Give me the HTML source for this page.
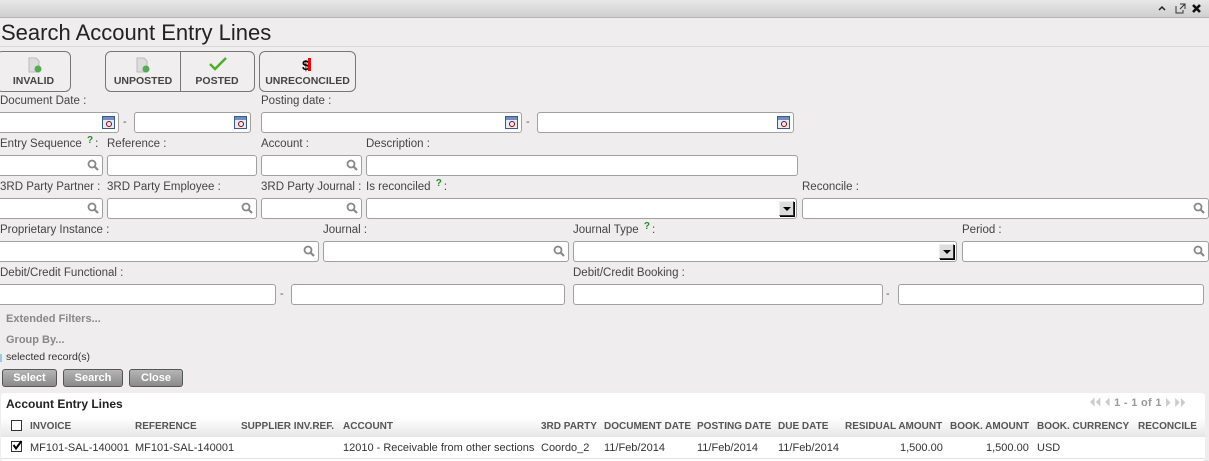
<!DOCTYPE html>
<html><head><meta charset="utf-8"><style>
*{margin:0;padding:0;box-sizing:border-box}
body{width:1209px;height:461px;background:#efedee;font-family:"Liberation Sans",Arial,sans-serif;position:relative;overflow:hidden;color:#444}
.a{position:absolute}
.tb{left:0;top:0;width:1209px;height:18px;background:linear-gradient(#e8e8e8,#cfcfcf);border-bottom:1px solid #b5b5b5}
h1{position:absolute;left:1px;top:20px;font-size:22px;font-weight:normal;color:#222;letter-spacing:0}
.hr{left:0;top:46px;width:1209px;height:1px;background:#d9d9d9}
.btn{position:absolute;top:51px;height:41px;border:1px solid #777;border-radius:6px;background:#f0eeef;font-size:10.5px;font-weight:bold;color:#444;text-align:center}
.btn span{position:absolute;bottom:4px;left:0;right:0}
.l{position:absolute;font-size:11.5px;color:#444;white-space:nowrap;line-height:13px}
.q{position:relative;top:-4px;color:#2a8a2a;font-size:10px;font-weight:bold;margin:0 2px}
.i{position:absolute;height:21px;background:#fff;border:1px solid #a0a0a0;border-radius:3px}
.d{position:absolute;font-size:11px;color:#555}
.cal{position:absolute;right:3px;top:3px;width:13px;height:13px;border:1px solid #3b5a8a;background:#e6ecf5}
.cal:before{content:"";position:absolute;left:0;top:0;right:0;height:3px;background:#6d8fc4}
.cal:after{content:"";position:absolute;right:2px;top:4px;width:4px;height:4px;border:1px solid #900;border-radius:50%}
.srch{position:absolute;right:3px;top:3px}
.sel{position:absolute;right:2px;top:2px;width:15px;height:15px;background:#ddd;border:1px solid #333;border-top-color:#eee;border-left-color:#eee;box-shadow:1px 1px 0 #000}
.sel:after{content:"";position:absolute;left:3px;top:5px;border-left:4px solid transparent;border-right:4px solid transparent;border-top:4px solid #000}
.lk{position:absolute;font-size:11px;color:#888;font-weight:bold}
.gb{position:absolute;top:369px;height:18px;border:1px solid #555;border-radius:3px;background:linear-gradient(#b5b5b5,#8a8a8a);color:#fff;font-size:11px;font-weight:bold;text-align:center;line-height:16px}
.panel{left:1px;top:393px;width:1204px;height:68px;background:#fff;border-radius:3px}
.th{position:absolute;top:418px;height:19px;left:1px;width:1204px;background:linear-gradient(#fff,#e6e6e6)}
.h{position:absolute;top:421px;font-size:10px;font-weight:bold;color:#555;white-space:nowrap}
.c{position:absolute;top:442px;font-size:11px;color:#333;white-space:nowrap}
.cb{position:absolute;width:11px;height:11px;border:1px solid #333;background:#fff}
</style></head><body>
<div class="a tb"></div>
<svg class="a" style="left:1157px;top:4px" width="10" height="8"><path d="M2 6 L5 3 L8 6" stroke="#222" stroke-width="1.5" fill="none"/></svg>
<svg class="a" style="left:1175px;top:3px" width="11" height="11"><path d="M1 3 V10 H8 V7 M5 1 H10 V6 M10 1 L5 6" stroke="#333" stroke-width="1" fill="none"/></svg>
<svg class="a" style="left:1191px;top:3px" width="11" height="11"><path d="M2 2 L9 9 M9 2 L2 9" stroke="#111" stroke-width="2.6"/></svg>
<h1>Search Account Entry Lines</h1>
<div class="a hr"></div>

<div class="btn" style="left:-4px;width:75px"><svg class="a" style="left:31px;top:5px" width="14" height="16"><path d="M1 1 H8 L11 4 V15 H1 Z" fill="#ddd" stroke="#bbb"/><circle cx="10" cy="12" r="3.5" fill="#5a5"/></svg><span>INVALID</span></div>
<div class="btn" style="left:105px;width:150px"><div class="a" style="left:74px;top:0;width:1px;height:39px;background:#777"></div>
<svg class="a" style="left:30px;top:5px" width="14" height="16"><path d="M1 1 H8 L11 4 V15 H1 Z" fill="#ddd" stroke="#bbb"/><circle cx="10" cy="12" r="3.5" fill="#5a5"/></svg>
<svg class="a" style="left:103px;top:5px" width="18" height="14"><path d="M1 7 L6 12 L17 1" stroke="#4caf2a" stroke-width="2.5" fill="none"/></svg>
<span style="width:74px;left:0;right:auto">UNPOSTED</span><span style="left:74px">POSTED</span></div>
<div class="btn" style="left:259px;width:97px"><div class="a" style="left:42px;top:5px;font-size:14px;font-weight:bold;color:#000">$<span style="position:absolute;left:6px;top:1px;bottom:auto;width:3px;height:13px;background:#e00"></span></div><span>UNRECONCILED</span></div>

<div class="l" style="left:0;top:95px">Document Date :</div>
<div class="l" style="left:261px;top:95px">Posting date :</div>
<div class="i" style="left:-3px;top:112px;width:122px"><div class="cal"></div></div><div class="d" style="left:123px;top:116px">-</div>
<div class="i" style="left:134px;top:112px;width:117px"><div class="cal"></div></div>
<div class="i" style="left:261px;top:112px;width:261px"><div class="cal"></div></div><div class="d" style="left:526px;top:116px">-</div>
<div class="i" style="left:537px;top:112px;width:257px"><div class="cal"></div></div>

<div class="l" style="left:0;top:138px">Entry Sequence <span class="q">?</span>:</div>
<div class="l" style="left:107px;top:138px">Reference :</div>
<div class="l" style="left:261px;top:138px">Account :</div>
<div class="l" style="left:366px;top:138px">Description :</div>
<div class="i" style="left:-3px;top:155px;width:106px"><svg class="srch" width="12" height="12"><circle cx="5" cy="5" r="3.5" stroke="#888" stroke-width="1.8" fill="none"/><path d="M7.5 7.5 L11 11" stroke="#888" stroke-width="2.2"/></svg></div>
<div class="i" style="left:107px;top:155px;width:150px"></div>
<div class="i" style="left:261px;top:155px;width:101px"><svg class="srch" width="12" height="12"><circle cx="5" cy="5" r="3.5" stroke="#888" stroke-width="1.8" fill="none"/><path d="M7.5 7.5 L11 11" stroke="#888" stroke-width="2.2"/></svg></div>
<div class="i" style="left:366px;top:155px;width:432px"></div>

<div class="l" style="left:0;top:181px">3RD Party Partner :</div>
<div class="l" style="left:107px;top:181px">3RD Party Employee :</div>
<div class="l" style="left:261px;top:181px">3RD Party Journal :</div>
<div class="l" style="left:366px;top:181px">Is reconciled <span class="q">?</span>:</div>
<div class="l" style="left:802px;top:181px">Reconcile :</div>
<div class="i" style="left:-3px;top:198px;width:106px"><svg class="srch" width="12" height="12"><circle cx="5" cy="5" r="3.5" stroke="#888" stroke-width="1.8" fill="none"/><path d="M7.5 7.5 L11 11" stroke="#888" stroke-width="2.2"/></svg></div>
<div class="i" style="left:107px;top:198px;width:150px"><svg class="srch" width="12" height="12"><circle cx="5" cy="5" r="3.5" stroke="#888" stroke-width="1.8" fill="none"/><path d="M7.5 7.5 L11 11" stroke="#888" stroke-width="2.2"/></svg></div>
<div class="i" style="left:261px;top:198px;width:101px"><svg class="srch" width="12" height="12"><circle cx="5" cy="5" r="3.5" stroke="#888" stroke-width="1.8" fill="none"/><path d="M7.5 7.5 L11 11" stroke="#888" stroke-width="2.2"/></svg></div>
<div class="i" style="left:366px;top:198px;width:431px"><div class="sel"></div></div>
<div class="i" style="left:802px;top:198px;width:407px"><svg class="srch" width="12" height="12"><circle cx="5" cy="5" r="3.5" stroke="#888" stroke-width="1.8" fill="none"/><path d="M7.5 7.5 L11 11" stroke="#888" stroke-width="2.2"/></svg></div>

<div class="l" style="left:0;top:224px">Proprietary Instance :</div>
<div class="l" style="left:323px;top:224px">Journal :</div>
<div class="l" style="left:573px;top:224px">Journal Type <span class="q">?</span>:</div>
<div class="l" style="left:962px;top:224px">Period :</div>
<div class="i" style="left:-3px;top:241px;width:322px"><svg class="srch" width="12" height="12"><circle cx="5" cy="5" r="3.5" stroke="#888" stroke-width="1.8" fill="none"/><path d="M7.5 7.5 L11 11" stroke="#888" stroke-width="2.2"/></svg></div>
<div class="i" style="left:323px;top:241px;width:246px"><svg class="srch" width="12" height="12"><circle cx="5" cy="5" r="3.5" stroke="#888" stroke-width="1.8" fill="none"/><path d="M7.5 7.5 L11 11" stroke="#888" stroke-width="2.2"/></svg></div>
<div class="i" style="left:573px;top:241px;width:384px"><div class="sel"></div></div>
<div class="i" style="left:962px;top:241px;width:247px"><svg class="srch" width="12" height="12"><circle cx="5" cy="5" r="3.5" stroke="#888" stroke-width="1.8" fill="none"/><path d="M7.5 7.5 L11 11" stroke="#888" stroke-width="2.2"/></svg></div>

<div class="l" style="left:0;top:267px">Debit/Credit Functional :</div>
<div class="l" style="left:573px;top:267px">Debit/Credit Booking :</div>
<div class="i" style="left:-3px;top:284px;width:279px"></div><div class="d" style="left:280px;top:288px">-</div>
<div class="i" style="left:291px;top:284px;width:274px"></div>
<div class="i" style="left:573px;top:284px;width:310px"></div><div class="d" style="left:886px;top:288px">-</div>
<div class="i" style="left:898px;top:284px;width:306px"></div>

<div class="lk" style="left:6px;top:313px">Extended Filters...</div>
<div class="lk" style="left:6px;top:334px">Group By...</div>
<div class="a" style="left:0;top:354px;width:2px;height:8px;background:#9cd"></div>
<div class="l" style="left:6px;top:351px;font-size:10.5px;color:#333">selected record(s)</div>
<div class="gb" style="left:2px;width:55px">Select</div>
<div class="gb" style="left:63px;width:60px">Search</div>
<div class="gb" style="left:129px;width:54px">Close</div>

<div class="a panel"></div>
<div class="a" style="left:6px;top:397px;font-size:12px;font-weight:bold;color:#222">Account Entry Lines</div>
<div class="a" style="left:1090px;top:397px;font-size:11px;color:#ccc;font-weight:bold;letter-spacing:0.3px">⏴⏴ ⏴ <span style="color:#999">1 - 1 of 1</span> ⏵ ⏵⏵</div>
<div class="th"></div>
<div class="cb" style="left:11px;top:420px"></div>
<div class="h" style="left:30px">INVOICE</div>
<div class="h" style="left:135px">REFERENCE</div>
<div class="h" style="left:241px">SUPPLIER INV.REF.</div>
<div class="h" style="left:343px">ACCOUNT</div>
<div class="h" style="left:541px">3RD PARTY</div>
<div class="h" style="left:604px">DOCUMENT DATE</div>
<div class="h" style="left:697px">POSTING DATE</div>
<div class="h" style="left:778px">DUE DATE</div>
<div class="h" style="left:845px">RESIDUAL AMOUNT</div>
<div class="h" style="left:950px">BOOK. AMOUNT</div>
<div class="h" style="left:1037px">BOOK. CURRENCY</div>
<div class="h" style="left:1138px">RECONCILE</div>
<div class="cb" style="left:11px;top:441px"><svg width="11" height="11" style="position:absolute;left:0;top:-2px"><path d="M1.5 5 L4 8.5 L9.5 1" stroke="#000" stroke-width="2" fill="none"/></svg></div>
<div class="c" style="left:30px">MF101-SAL-140001</div>
<div class="c" style="left:135px">MF101-SAL-140001</div>
<div class="c" style="left:343px">12010 - Receivable from other sections</div>
<div class="c" style="left:541px">Coordo_2</div>
<div class="c" style="left:604px">11/Feb/2014</div>
<div class="c" style="left:697px">11/Feb/2014</div>
<div class="c" style="left:778px">11/Feb/2014</div>
<div class="c" style="left:900px">1,500.00</div>
<div class="c" style="left:986px">1,500.00</div>
<div class="c" style="left:1037px">USD</div>
<div class="a" style="left:1px;top:458px;width:1204px;height:1px;background:#e0e0e0"></div>
</body></html>
